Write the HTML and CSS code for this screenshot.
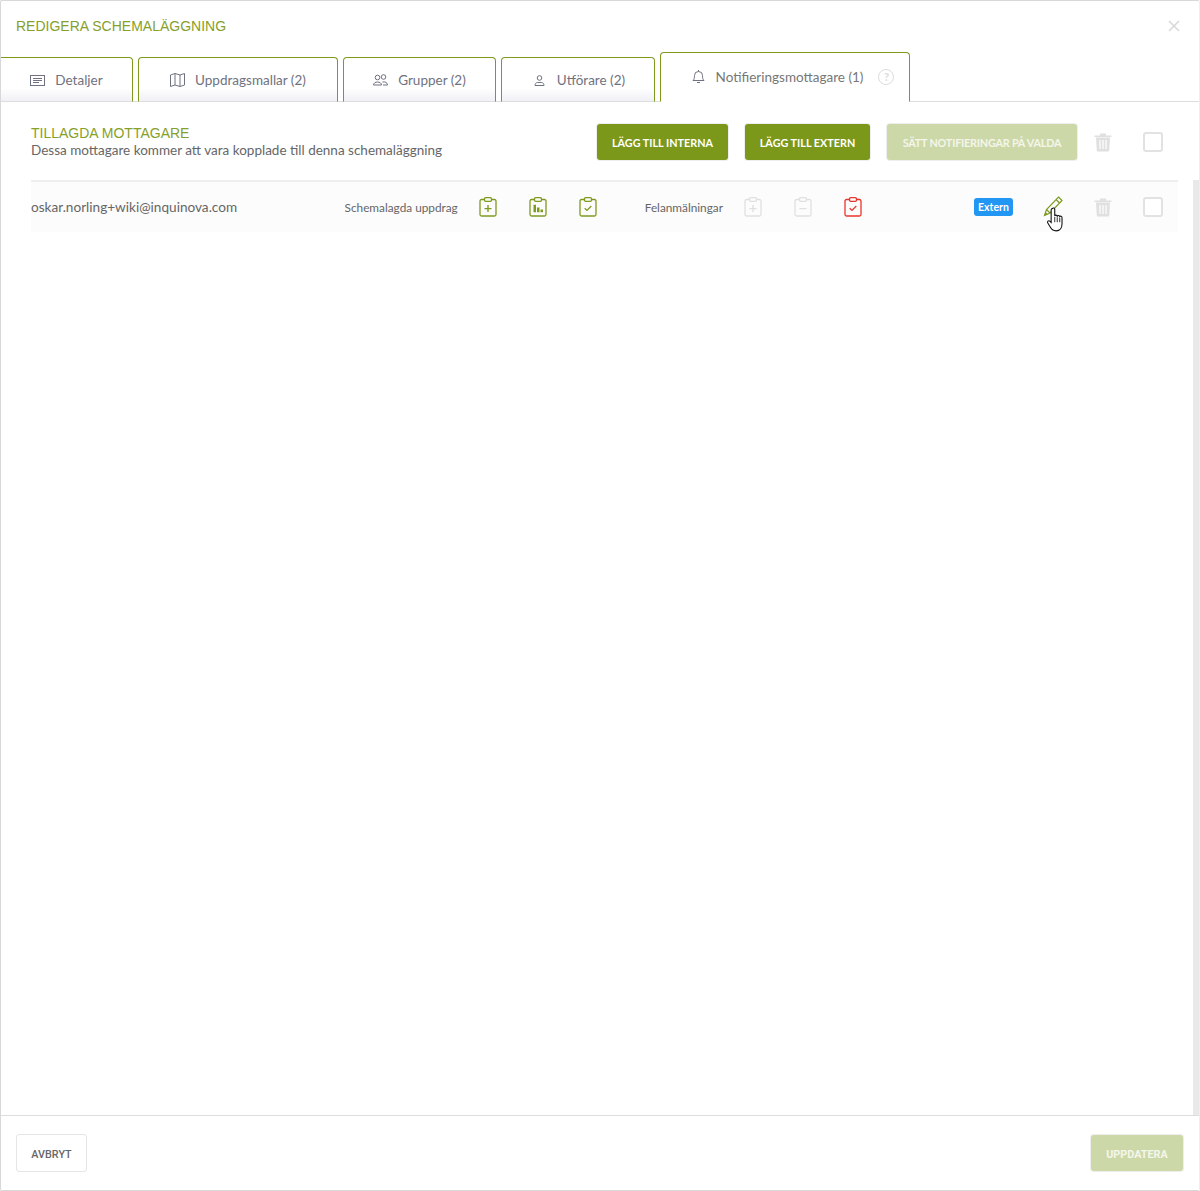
FILE: index.html
```html
<!DOCTYPE html>
<html lang="en">
<head>
    <meta charset="UTF-8">
    <title>Redigera schemaläggning</title>
    <link rel="stylesheet" href="styles.css">
</head>
<body>
    <svg class="defs" width="0" height="0">
        <symbol id="clip" viewBox="0 0 18 20">
            <path d="M5.500 2.500H2.500a1.500 1.500 0 0 0-1.500 1.500v13.500a1.500 1.500 0 0 0 1.500 1.500h13a1.500 1.500 0 0 0 1.500-1.500V4a1.500 1.500 0 0 0-1.500-1.500h-3" fill="none" stroke="currentColor" stroke-width="1.300"/>
            <rect x="5.500" y="0.700" width="7" height="3.600" rx="1.200" fill="none" stroke="currentColor" stroke-width="1.300"/>
        </symbol>
        <symbol id="trash" viewBox="0 0 18 20">
            <path d="M0.500 3.500h17v1.500h-17zM6 3.500V1.500h6v2z" fill="currentColor"/>
            <path d="M2 5.500h14l-0.800 13a1 1 0 0 1-1 1H3.800a1 1 0 0 1-1-1z" fill="currentColor"/>
            <path d="M6 8v9M9 8v9M12 8v9" stroke="#fff" stroke-width="1.200"/>
        </symbol>
    </svg>

    <div class="modal">
        <div class="modal-head">
            <div class="modal-title">REDIGERA SCHEMALÄGGNING</div>
            <svg class="close" width="12" height="12" viewBox="0 0 12 12"><path d="M1 1l10 10M11 1L1 11" stroke="currentColor" stroke-width="1.600"/></svg>
        </div>

        <div class="tabs">
            <div class="tab tab-first">
                <svg class="tab-icon" width="15" height="11" viewBox="0 0 15 11"><rect x="0.500" y="0.500" width="14" height="10" fill="none" stroke="currentColor"/><path d="M3 3.500h9M3 5.500h9M3 7.500h6" stroke="currentColor"/></svg>
                Detaljer
            </div>
            <div class="tab tab-maps">
                <svg class="tab-icon" width="15" height="14" viewBox="0 0 15 14"><path d="M0.500 2l4.500-1.500 5 1.500 4.500-1.500V12l-4.500 1.500-5-1.500L0.500 13.500zM5 0.500V12M10 2v11.500" fill="none" stroke="currentColor"/></svg>
                Uppdragsmallar (2)
            </div>
            <div class="tab tab-groups">
                <svg class="tab-icon" width="15" height="12" viewBox="0 0 15 12"><circle cx="4.500" cy="3.500" r="2.300" fill="none" stroke="currentColor"/><circle cx="10.500" cy="3" r="2.300" fill="none" stroke="currentColor"/><path d="M0.500 11c0-4 8-4 8 0zM10 11h4.500c0-2.500-2.500-3.500-5-3" fill="none" stroke="currentColor"/></svg>
                Grupper (2)
            </div>
            <div class="tab tab-users">
                <svg class="tab-icon" width="11" height="11" viewBox="0 0 11 11"><circle cx="5.500" cy="3" r="2.300" fill="none" stroke="currentColor"/><path d="M1 10.500c0-1.800 1-3 2.500-3h4c1.500 0 2.500 1.200 2.500 3z" fill="none" stroke="currentColor"/></svg>
                Utförare (2)
            </div>
            <div class="tab tab-active">
                <svg class="tab-icon" width="13" height="14" viewBox="0 0 13 14"><path d="M1 10.500c1-1 1.500-2 1.500-5a4 4 0 0 1 8 0c0 3 .5 4 1.500 5zM5 12.500h3" fill="none" stroke="currentColor"/><path d="M6.500 0v1.500" stroke="currentColor"/></svg>
                Notifieringsmottagare (1)
                <span class="help">?</span>
            </div>
        </div>

        <div class="section-head">
            <div class="section-text">
                <div class="section-title">TILLAGDA MOTTAGARE</div>
                <div class="section-sub">Dessa mottagare kommer att vara kopplade till denna schemaläggning</div>
            </div>
            <button class="btn btn-primary btn-internal">LÄGG TILL INTERNA</button>
            <button class="btn btn-primary btn-external">LÄGG TILL EXTERN</button>
            <button class="btn btn-primary btn-disabled btn-set">SÄTT NOTIFIERINGAR PÅ VALDA</button>
            <div class="cell icon-off"><svg width="18" height="20"><use href="#trash"/></svg></div>
            <div class="cell"><span class="checkbox"></span></div>
            <div class="head-spacer"></div>
        </div>

        <div class="list-wrap">
            <div class="list">
                <div class="row">
                    <div class="email">oskar.norling+wiki@inquinova.com</div>
                    <div class="row-label">Schemalagda uppdrag</div>
                    <div class="cell icon-on">
                        <svg width="18" height="20"><use href="#clip"/></svg>
                        <svg class="glyph" width="8" height="8" viewBox="0 0 8 8"><path d="M4 0.500v7M0.500 4h7" stroke="currentColor" stroke-width="1.400"/></svg>
                    </div>
                    <div class="cell icon-on">
                        <svg width="18" height="20"><use href="#clip"/></svg>
                        <svg class="glyph" width="10" height="8" viewBox="0 0 10 8"><path d="M0.500 0h2.500v8H0.500zM4 3h2.500v5H4zM7.500 5h2.500v3H7.500z" fill="currentColor"/></svg>
                    </div>
                    <div class="cell icon-on">
                        <svg width="18" height="20"><use href="#clip"/></svg>
                        <svg class="glyph" width="8" height="6" viewBox="0 0 8 6"><path d="M0.700 3l2.300 2.200L7.300 0.800" fill="none" stroke="currentColor" stroke-width="1.300"/></svg>
                    </div>
                    <div class="row-label label-fault">Felanmälningar</div>
                    <div class="cell icon-off">
                        <svg width="18" height="20"><use href="#clip"/></svg>
                        <svg class="glyph" width="8" height="8" viewBox="0 0 8 8"><path d="M4 0.500v7M0.500 4h7" stroke="currentColor" stroke-width="1.400"/></svg>
                    </div>
                    <div class="cell icon-off">
                        <svg width="18" height="20"><use href="#clip"/></svg>
                        <svg class="glyph" width="8" height="8" viewBox="0 0 8 8"><path d="M0.500 4h7" stroke="currentColor" stroke-width="1.400"/></svg>
                    </div>
                    <div class="cell icon-red">
                        <svg width="18" height="20"><use href="#clip"/></svg>
                        <svg class="glyph" width="8" height="6" viewBox="0 0 8 6"><path d="M0.700 3l2.300 2.200L7.300 0.800" fill="none" stroke="currentColor" stroke-width="1.300"/></svg>
                    </div>
                    <div class="badge-cell"><span class="badge">Extern</span></div>
                    <div class="cell icon-on">
                        <svg width="20" height="22" viewBox="0 0 20 22"><path d="M15.500 1l3.500 3.500L7 17 1.500 19.500 3.500 13.500zM13 3.500l3.500 3.500M3.500 13.500L7 17" fill="none" stroke="currentColor" stroke-width="1.200"/><path d="M1.500 19.500l1-3.500 2.500 2.500z" fill="currentColor"/></svg>
                        <svg class="pointer" width="19" height="25" viewBox="0 0 16 23"><path d="M5 1.500c.8-1 2.200-.6 2.300.7v6c.4-1 2-1 2.300.2.500-.9 2-.8 2.300.4.600-.7 2.100-.4 2.100 1v5.700c0 3.500-2 6.500-5.500 6.500-2.800 0-4-1.300-5.200-3.300L.8 14.500c-.6-1.200.8-2.400 1.900-1.500l1.300 1.300V2.500c0-.4.400-.8 1-1z" fill="#fff" stroke="#111" stroke-width="1"/><path d="M7.300 9v5M9.600 9.500V14M11.900 10v4" stroke="#111" stroke-width="0.800"/></svg>
                    </div>
                    <div class="cell icon-off"><svg width="18" height="20"><use href="#trash"/></svg></div>
                    <div class="cell"><span class="checkbox"></span></div>
                </div>
            </div>
            <div class="scroll-track"></div>
        </div>

        <div class="modal-foot">
            <button class="btn btn-cancel">AVBRYT</button>
            <button class="btn btn-primary btn-disabled btn-update">UPPDATERA</button>
        </div>
    </div>
</body>
</html>
```

FILE: styles.css
```css
* {
    box-sizing: border-box;
}
html, body {
    height: 100%;
}
body {
    margin: 0;
    background: #fff;
    color: #666;
    font-family: "Lato", "Open Sans", sans-serif;
    font-size: 13.500px;
}
.defs {
    display: block;
    height: 0;
}
.modal {
    display: flex;
    flex-direction: column;
    height: 1191px;
    border: 1px solid #d8d8d8;
    border-right-color: #eee;
    border-radius: 2px;
    background: #fff;
}
.modal-head {
    display: flex;
    align-items: center;
    justify-content: space-between;
    height: 51px;
    padding: 0 19px 2px 15px;
    flex: none;
}
.modal-title {
    font-family: "Liberation Sans", Arial, sans-serif;
    font-size: 14px;
    color: #86a02a;
}
.close {
    color: #d9d9d9;
}
.tabs {
    display: flex;
    align-items: flex-end;
    gap: 5px;
    height: 50px;
    flex: none;
    border-bottom: 1px solid #ddd;
}
.tab {
    display: flex;
    align-items: center;
    justify-content: center;
    gap: 10px;
    height: 45px;
    margin-bottom: -1px;
    padding-top: 1px;
    border: 1px solid #7e9a1c;
    border-bottom: 1px solid #ddd;
    border-radius: 4px 4px 0 0;
    background: linear-gradient(to bottom, #fff 70%, #f0f0f6);
    color: #6f7280;
    white-space: nowrap;
}
.tab-icon {
    color: #6f7280;
    flex: none;
}
.tab-first {
    width: 132px;
    border-left: none;
    border-top-left-radius: 0;
}
.tab-maps {
    width: 200px;
}
.tab-groups {
    width: 153px;
}
.tab-users {
    width: 154px;
    gap: 12px;
    padding-left: 3px;
}
.tab-active {
    width: 250px;
    height: 50px;
    padding-bottom: 2px;
    padding-left: 16px;
    gap: 11px;
    border-bottom: 1px solid #fff;
    background: #fff;
    color: #777;
}
.help {
    display: inline-flex;
    align-items: center;
    justify-content: center;
    width: 16px;
    height: 16px;
    margin-left: 4px;
    border: 1.500px solid #ddd;
    border-radius: 50%;
    color: #ddd;
    font-size: 12px;
    font-weight: 700;
}
.section-head {
    display: flex;
    align-items: center;
    height: 78px;
    flex: none;
    padding: 2px 0 0 30px;
}
.section-text {
    flex: 1;
}
.section-title {
    font-family: "Liberation Sans", Arial, sans-serif;
    font-size: 14px;
    line-height: 16px;
    margin-bottom: 1px;
    color: #86a02a;
}
.section-sub {
    font-size: 13.500px;
    line-height: 17px;
    color: #666;
}
.head-spacer {
    width: 21px;
}
.btn {
    height: 36px;
    border: none;
    border-radius: 3px;
    font-family: "Lato", sans-serif;
    font-size: 10.800px;
    font-weight: 700;
    padding: 0;
}
.btn-primary {
    background: #7c981b;
    color: #fff;
    box-shadow: 0 0 0 1px #eee;
}
.btn-internal {
    width: 131px;
    margin-right: 17px;
}
.btn-external {
    width: 125px;
    margin-right: 17px;
}
.btn-set {
    width: 190px;
    margin-right: 1px;
    letter-spacing: -0.200px;
}
.btn-disabled {
    background: #cdd8a9;
    color: #f4f6ea;
}
.cell {
    position: relative;
    display: flex;
    align-items: center;
    justify-content: center;
    width: 50px;
    height: 36px;
    flex: none;
}
.glyph {
    position: absolute;
    left: 50%;
    top: 50%;
    transform: translate(-50%, -30%);
}
.icon-on {
    color: #7e9a20;
}
.icon-off {
    color: #e0e0e0;
}
.icon-red {
    color: #e8362d;
}
.checkbox {
    display: block;
    width: 20px;
    height: 20px;
    border: 2px solid #e2e2e2;
    border-radius: 3px;
    background: #fff;
}
.list-wrap {
    display: flex;
    flex: 1;
    min-height: 0;
}
.list {
    flex: 1;
    padding: 0 15px 0 30px;
}
.row {
    display: flex;
    align-items: center;
    height: 52px;
    border-top: 2px solid #eee;
    background: #fcfcfc;
}
.email {
    flex: 1;
    font-size: 13.600px;
    color: #666;
}
.row-label {
    margin-right: 5px;
    font-size: 11.800px;
    color: #666;
}
.label-fault {
    margin-left: 32px;
}
.badge-cell {
    width: 54px;
    margin-left: 96px;
    display: flex;
}
.badge {
    width: 39px;
    height: 18px;
    line-height: 18px;
    border-radius: 3px;
    background: #2196f3;
    color: #fff;
    font-size: 10.500px;
    font-weight: 700;
    text-align: center;
}
.pointer {
    position: absolute;
    left: 18px;
    top: 18px;
}
.scroll-track {
    width: 6px;
    flex: none;
    background: #e9e9e9;
}
.modal-foot {
    display: flex;
    align-items: center;
    justify-content: space-between;
    height: 75px;
    flex: none;
    padding: 0 16px 0 15px;
    border-top: 1px solid #ddd;
}
.btn-cancel {
    width: 71px;
    height: 38px;
    padding-top: 2px;
    border: 1px solid #e5e5e5;
    background: #fff;
    color: #666;
    font-family: "Roboto", sans-serif;
    font-weight: 500;
}
.btn-update {
    width: 92px;
    padding-top: 2px;
    font-family: "Roboto", sans-serif;
}
```
